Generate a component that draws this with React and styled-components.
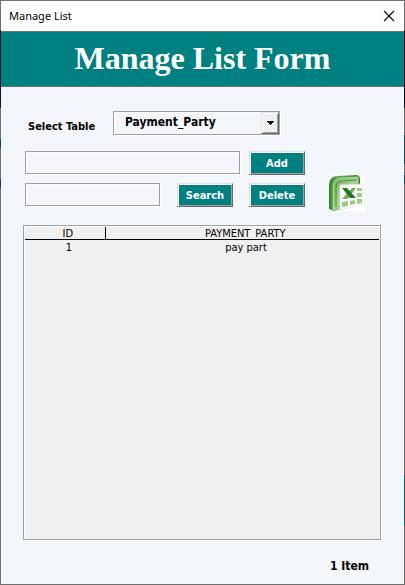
import React, { useState } from "react";
import styled, { createGlobalStyle } from "styled-components";

const TEAL = "#008080";
const FORM = "#f3f7fc";
const UI_FONT = '"DejaVu Sans Condensed", "DejaVu Sans", sans-serif';

const GlobalStyle = createGlobalStyle`
  * { box-sizing: border-box; }
  body { margin: 0; }
  button, input, select { font: inherit; color: inherit; margin: 0; border-radius: 0; }
`;

const Window = styled.main`
  min-height: 100vh;
  display: flex;
  flex-direction: column;
  padding: 1px;
  font: 11px/14px ${UI_FONT};
  color: #000;
  background:
    linear-gradient(#707070, #707070) top / 100% 1px no-repeat,
    linear-gradient(#707070, #707070) bottom / 100% 1px no-repeat,
    linear-gradient(#707070 30px, #15131f 30px 108px, #707070 108px 139px, #0b4a50 139px 148px, #707070 148px 179px, #0b4a50 179px 188px, #707070 188px) left / 1px 100% no-repeat,
    linear-gradient(#707070 30px, #080d18 30px 108px, #707070 108px 135px, #0b4a50 135px 164px, #707070 164px 175px, #0b4a50 175px 184px, #707070 184px 475px, #0b6065 475px 526px, #707070 526px) right / 1px 100% no-repeat,
    ${FORM};
`;

const TitleBar = styled.header`
  height: 31px;
  flex: none;
  display: flex;
  align-items: center;
  justify-content: space-between;
  padding: 0 9px 0 8px;
  background: #fff;
  border-bottom: 1px solid #707070;
  font: 11px/16px "Noto Sans", "Open Sans", sans-serif;
`;

const CloseButton = styled.button`
  display: flex;
  padding: 0;
  border: 0;
  background: none;
`;

const Banner = styled.h1`
  margin: 0;
  height: 55px;
  flex: none;
  background: ${TEAL};
  border-bottom: 1px solid #707070;
  color: #fff;
  text-align: center;
  font: bold 32px/52px "Liberation Serif", "Times New Roman", serif;
`;

const Tools = styled.form`
  display: flex;
  align-items: flex-end;
  gap: 24px;
  padding: 24px 39px 0 24px;
`;

const Fields = styled.div`
  flex: 1;
  min-width: 0;
  display: flex;
  flex-direction: column;
  gap: 8px;
  padding-bottom: 4px;
`;

const FieldRow = styled.div`
  display: flex;
  align-items: flex-start;
  gap: ${(p) => p.$gap}px;
`;

const SelectRow = styled.div`
  display: flex;
  align-items: center;
  justify-content: space-between;
  padding: 0 25px 0 3px;
  margin-bottom: 8px;
`;

const Label = styled.label`
  padding-top: 8px;
  font: bold 11px/14px ${UI_FONT};
  white-space: nowrap;
`;

const Combo = styled.div`
  width: 167px;
  height: 24px;
  display: grid;
  grid-template-columns: 1fr 18px;
  border: 1px solid #a0a0a0;
  box-shadow: inset 1px 1px #fff, 1px 1px #fff;
`;

const Select = styled.select`
  grid-area: 1 / 1 / 2 / 3;
  appearance: none;
  min-width: 0;
  border: 0;
  padding: 0 18px 2px 11px;
  background: transparent;
  font: bold 12px/14px ${UI_FONT};
`;

const ComboArrow = styled.span`
  grid-area: 1 / 2;
  pointer-events: none;
  display: flex;
  align-items: center;
  justify-content: center;
  background: #f0f0f0;
  border: 1px solid;
  border-color: #e3e3e3 #696969 #696969 #e3e3e3;
  box-shadow: inset 1px 1px #fff, inset -1px -1px #a0a0a0;
`;

const TextBox = styled.input`
  flex: 1;
  min-width: 0;
  height: 23px;
  padding: 2px 4px;
  border: 1px solid #a0a0a0;
  background: ${FORM};
  box-shadow: inset 1px 1px #fff, 1px 1px #fff;
`;

const Button = styled.button`
  width: 56px;
  height: 24px;
  flex: none;
  padding: 2px 0 0;
  border: 1px solid;
  border-color: #e3e3e3 #696969 #696969 #e3e3e3;
  box-shadow: inset 1px 1px #fff, inset -1px -1px #a0a0a0;
  background: ${TEAL};
  color: #fff;
  font: bold 11px/14px ${UI_FONT};
  & + & { margin-left: -1px; }
`;

const ExportButton = styled.button`
  width: 36px;
  height: 36px;
  flex: none;
  display: flex;
  padding: 0;
  border: 0;
  background: #fff;
`;

const ListBox = styled.section`
  flex: 1;
  margin: 14px 23px 0 22px;
  padding: 1px;
  border: 1px solid #a0a0a0;
  background: #f0f0f0;
  box-shadow: inset 1px 1px #fff, 1px 1px #fff;
`;

const Table = styled.table`
  width: 100%;
  table-layout: fixed;
  border-collapse: collapse;
  text-align: center;
  line-height: 12px;
`;

const HeadCell = styled.th`
  width: ${(p) => p.$width || "auto"};
  padding: 2px 0 0 6px;
  font-weight: normal;
  border-bottom: 1px solid #000;
  & + & { border-left: 1px solid #000; }
`;

const HeadText = styled.span`
  display: block;
  overflow: hidden;
  line-height: 10px;
`;

const Cell = styled.td`
  padding: 2px 0 0 8px;
`;

const Status = styled.footer`
  flex: none;
  padding: 19px 35px 11px;
  text-align: right;
  font: bold 12px/14px ${UI_FONT};
`;

const CloseIcon = () => (
  <svg width="12" height="12" viewBox="0 0 12 12" aria-hidden="true">
    <path d="M1 1 11 11M11 1 1 11" stroke="#000" strokeWidth="1.1" fill="none" />
  </svg>
);

const ArrowIcon = () => (
  <svg width="7" height="4" viewBox="0 0 7 4" shapeRendering="crispEdges" aria-hidden="true">
    <path d="M0 0H7V1H6V2H5V3H4V4H3V3H2V2H1V1H0Z" />
  </svg>
);

const SheetIcon = () => (
  <svg width="36" height="36" viewBox="0 0 36 36" aria-hidden="true">
    <defs>
      <linearGradient id="cover" x1="0" y1="0" x2="1" y2="1">
        <stop offset="0" stopColor="#6fb058" />
        <stop offset=".5" stopColor="#a9d395" />
        <stop offset="1" stopColor="#4f9a3e" />
      </linearGradient>
      <linearGradient id="spine" x1="0" y1="0" x2="1" y2="0">
        <stop offset="0" stopColor="#3a8630" />
        <stop offset=".3" stopColor="#63a94f" />
        <stop offset="1" stopColor="#3a8630" />
      </linearGradient>
    </defs>
    <path d="M0 10Q0 1 9 1L27 0Q31 0 31 4V11H12V34L5 36 0 34Z" fill="url(#spine)" />
    <path d="M4 12Q4 3 13 3L29 2V12H12V33L4 35Z" fill="url(#cover)" stroke="#b9dda8" strokeWidth=".8" />
    <path d="M7 32V13Q7 6 14 6L28 5" fill="none" stroke="#4b953b" strokeWidth="1.2" />
    <path d="M11 10 35 9V29L11 35Z" fill="#fff" stroke="#dce8d8" strokeWidth=".7" />
    <g fill="#9acb80">
      <path d="M28 13H33V16H28ZM28 18H33V22H28ZM28 24H33V28L28 29Z" />
      <path d="M13 27 19 26V31L13 32ZM21 26 26 25V29L21 30Z" />
    </g>
    <path d="M21 21 27 13 23 13 13 24H18Z" fill="#6cb04f" />
    <path d="M13 13H18L27 23H21Z" fill="#287522" />
  </svg>
);

const rows = [{ id: 1, name: "pay part" }];

export default function App() {
  const [table, setTable] = useState("Payment_Party");

  return (
    <>
      <GlobalStyle />
      <Window>
        <TitleBar>
          <span>Manage List</span>
          <CloseButton type="button" aria-label="Close"><CloseIcon /></CloseButton>
        </TitleBar>
        <Banner>Manage List Form</Banner>
        <Tools onSubmit={(e) => e.preventDefault()}>
          <Fields>
            <SelectRow>
              <Label htmlFor="table">Select Table</Label>
              <Combo>
                <Select id="table" value={table} onChange={(e) => setTable(e.target.value)}>
                  <option>Payment_Party</option>
                </Select>
                <ComboArrow><ArrowIcon /></ComboArrow>
              </Combo>
            </SelectRow>
            <FieldRow $gap={9}>
              <TextBox aria-label="New item" />
              <Button type="button">Add</Button>
            </FieldRow>
            <FieldRow $gap={17}>
              <TextBox aria-label="Search text" />
              <Button type="submit">Search</Button>
              <Button type="button">Delete</Button>
            </FieldRow>
          </Fields>
          <ExportButton type="button" aria-label="Export to spreadsheet"><SheetIcon /></ExportButton>
        </Tools>
        <ListBox>
          <Table>
            <thead>
              <tr>
                <HeadCell scope="col" $width="80px"><HeadText>ID</HeadText></HeadCell>
                <HeadCell scope="col"><HeadText>PAYMENT_PARTY</HeadText></HeadCell>
              </tr>
            </thead>
            <tbody>
              {rows.map((row) => (
                <tr key={row.id}>
                  <Cell>{row.id}</Cell>
                  <Cell>{row.name}</Cell>
                </tr>
              ))}
            </tbody>
          </Table>
        </ListBox>
        <Status>{rows.length} Item</Status>
      </Window>
    </>
  );
}
